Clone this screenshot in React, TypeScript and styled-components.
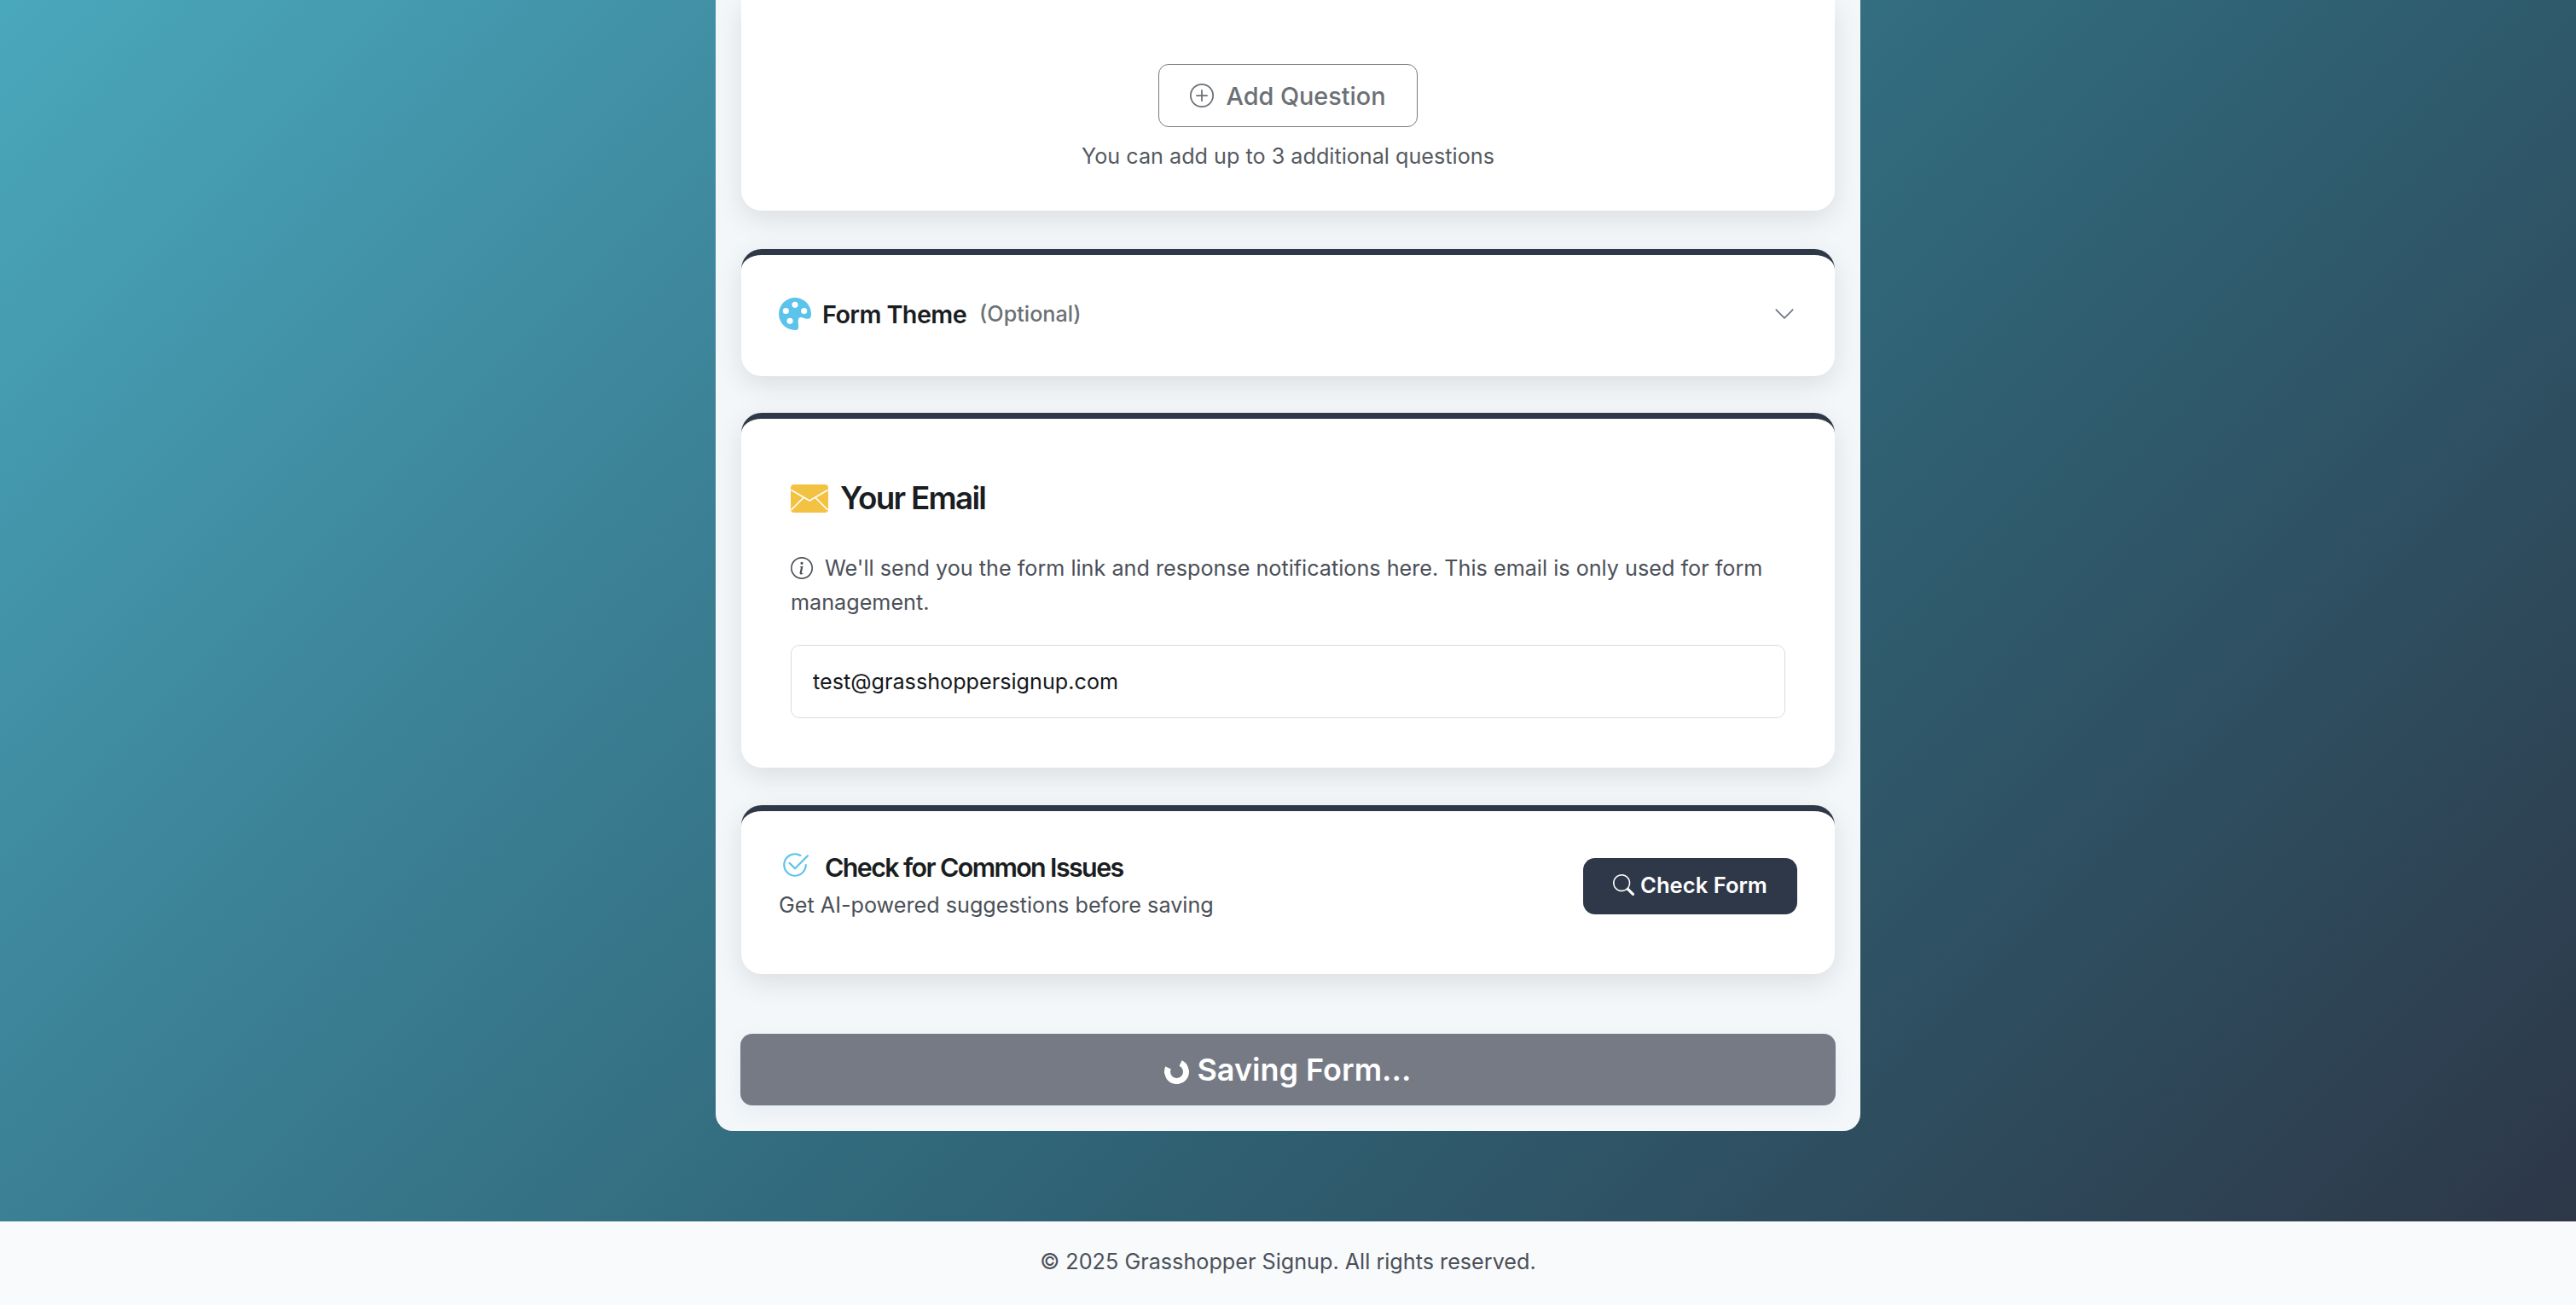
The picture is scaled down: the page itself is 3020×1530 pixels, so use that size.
import React from "react";
import styled, { createGlobalStyle } from "styled-components";
import {
  BsCheck2Circle,
  BsChevronDown,
  BsInfoCircle,
  BsPaletteFill,
  BsPlusCircle,
  BsSearch,
} from "react-icons/bs";

const GlobalStyle = createGlobalStyle`
  html, body {
    margin: 0;
    padding: 0;
    height: 1530px;
    overflow: hidden;
    background: #f8fafc;
    font-family: Inter, "Liberation Sans", sans-serif;
  }
  * {
    box-sizing: border-box;
  }
`;

function EnvelopeIcon() {
  return (
    <svg width="44" height="33" viewBox="0 0 44 33">
      <rect x="0" y="0" width="44" height="33" rx="4" fill="#f4c242" />
      <path d="M0.5 6.5 L22 19 L43.5 6.5 M0.5 30 L15 15.5 M43.5 30 L29 15.5" fill="none" stroke="#fff" strokeWidth="1.6" />
    </svg>
  );
}

function App() {
  return (
    <>
      <GlobalStyle />
      <Page>
        <Main>
          <Panel>
            <QuestionsCard>
              <AddButton>
                <BsPlusCircle size={28} />
                Add Question
              </AddButton>
              <Hint>You can add up to 3 additional questions</Hint>
            </QuestionsCard>

            <ThemeCard>
              <ThemeTitle>
                <BsPaletteFill size={38} color="#5cc4ea" />
                <ThemeName>Form Theme</ThemeName>
                <Optional>(Optional)</Optional>
              </ThemeTitle>
              <BsChevronDown size={26} color="#6b7280" />
            </ThemeCard>

            <EmailCard>
              <EmailHeading>
                <EnvelopeIcon />
                Your Email
              </EmailHeading>
              <EmailNote>
                <NoteIcon>
                  <BsInfoCircle size={26} />
                </NoteIcon>
                We'll send you the form link and response notifications here. This email is only used for form management.
              </EmailNote>
              <EmailInput value="test@grasshoppersignup.com" readOnly />
            </EmailCard>

            <CheckCard>
              <div>
                <CheckHeading>
                  <CheckIcon size={34} />
                  Check for Common Issues
                </CheckHeading>
                <CheckSub>Get AI-powered suggestions before saving</CheckSub>
              </div>
              <CheckButton>
                <BsSearch size={25} />
                Check Form
              </CheckButton>
            </CheckCard>

            <SaveButton disabled>
              <Spinner />
              Saving Form...
            </SaveButton>
          </Panel>
        </Main>
        <Footer>© 2025 Grasshopper Signup. All rights reserved.</Footer>
      </Page>
    </>
  );
}

const Page = styled.div`
  height: 1530px;
  display: flex;
  flex-direction: column;
`;

const Main = styled.main`
  height: 1432px;
  flex-shrink: 0;
  display: flex;
  justify-content: center;
  background: linear-gradient(135deg, #4aa8bc 0%, #3c8297 30%, #2f6274 60%, #2d3748 100%);
`;

const Panel = styled.div`
  width: 1342px;
  height: 1326px;
  padding: 0 30px 30px;
  display: flex;
  flex-direction: column;
  background: #f4f7f9;
  border-radius: 0 0 20px 20px;
`;

const Card = styled.section`
  background: #fff;
  border-radius: 24px;
  border-top: 7px solid #2f3848;
  box-shadow: 0 10px 32px rgba(0, 0, 0, 0.1);
`;

const QuestionsCard = styled(Card)`
  height: 247px;
  border-top: 0;
  border-radius: 0 0 24px 24px;
  padding-top: 75px;
  display: flex;
  flex-direction: column;
  align-items: center;
`;

const AddButton = styled.button`
  width: 304px;
  height: 74px;
  display: flex;
  align-items: center;
  justify-content: center;
  gap: 14px;
  background: #fff;
  border: 1px solid #74777c;
  border-radius: 12px;
  color: #6c7075;
  font: 500 28.8px Inter, sans-serif;
`;

const Hint = styled.p`
  margin: 14px 0 0;
  font-size: 25.2px;
  line-height: 40px;
  color: #555a60;
`;

const ThemeCard = styled(Card)`
  height: 149px;
  margin-top: 45px;
  padding: 0 46px 4px 44px;
  display: flex;
  align-items: center;
  justify-content: space-between;
`;

const ThemeTitle = styled.div`
  display: flex;
  align-items: center;
`;

const ThemeName = styled.span`
  margin-left: 13px;
  font-size: 28.8px;
  font-weight: 600;
  letter-spacing: -0.6px;
  color: #1a1d21;
`;

const Optional = styled.span`
  margin-left: 15px;
  font-size: 25.2px;
  font-weight: 500;
  color: #6b7075;
`;

const EmailCard = styled(Card)`
  height: 416px;
  margin-top: 43px;
  padding: 69px 58px 0;
`;

const EmailHeading = styled.h2`
  margin: 0;
  display: flex;
  align-items: center;
  gap: 14px;
  font-size: 36.8px;
  line-height: 48px;
  font-weight: 600;
  letter-spacing: -1.7px;
  color: #1a1d21;
`;

const EmailNote = styled.p`
  margin: 38px 0 0;
  font-size: 25.2px;
  line-height: 40px;
  color: #4b5058;
`;

const NoteIcon = styled.span`
  display: inline-block;
  margin-right: 14px;
  vertical-align: -4px;
  line-height: 0;
`;

const EmailInput = styled.input`
  display: block;
  width: 100%;
  height: 86px;
  margin-top: 30px;
  padding: 0 25px;
  border: 1px solid #d8dbe0;
  border-radius: 10px;
  background: #fff;
  color: #15181c;
  font: 400 25.2px Inter, sans-serif;
`;

const CheckCard = styled(Card)`
  height: 198px;
  margin-top: 44px;
  padding: 0 44px 16px;
  display: flex;
  align-items: center;
  justify-content: space-between;
`;

const CheckHeading = styled.h3`
  margin: 0;
  display: flex;
  align-items: center;
  gap: 18px;
  font-size: 30.4px;
  line-height: 40px;
  font-weight: 600;
  letter-spacing: -1.6px;
  color: #1a1d21;
`;

const CheckIcon = styled(BsCheck2Circle)`
  margin: -5px 0 0 2px;
  color: #5cc4ea;
`;

const CheckSub = styled.p`
  margin: 4px 0 0;
  font-size: 25.2px;
  line-height: 40px;
  color: #4b5058;
`;

const CheckButton = styled.button`
  width: 251px;
  height: 66px;
  padding: 0 0 3px;
  display: flex;
  align-items: center;
  justify-content: center;
  gap: 7px;
  border: 0;
  border-radius: 14px;
  background: #2f3848;
  color: #fff;
  font: 600 25.6px Inter, sans-serif;
`;

const SaveButton = styled.button`
  height: 84px;
  margin: 70px -1px 0;
  display: flex;
  align-items: center;
  justify-content: center;
  gap: 9px;
  border: 0;
  border-radius: 14px;
  background: #767a85;
  box-shadow: 0 8px 24px rgba(60, 110, 180, 0.08);
  color: #fff;
  font: 600 36px Inter, sans-serif;
`;

const Spinner = styled.span`
  width: 29px;
  height: 29px;
  margin-top: 4px;
  border: 7px solid #fff;
  border-top-color: transparent;
  border-radius: 50%;
  transform: rotate(-20deg);
`;

const Footer = styled.footer`
  height: 98px;
  flex-shrink: 0;
  padding-bottom: 4px;
  display: flex;
  align-items: center;
  justify-content: center;
  background: #f8fafc;
  color: #4b5058;
  font-size: 25.2px;
`;

export default App;
